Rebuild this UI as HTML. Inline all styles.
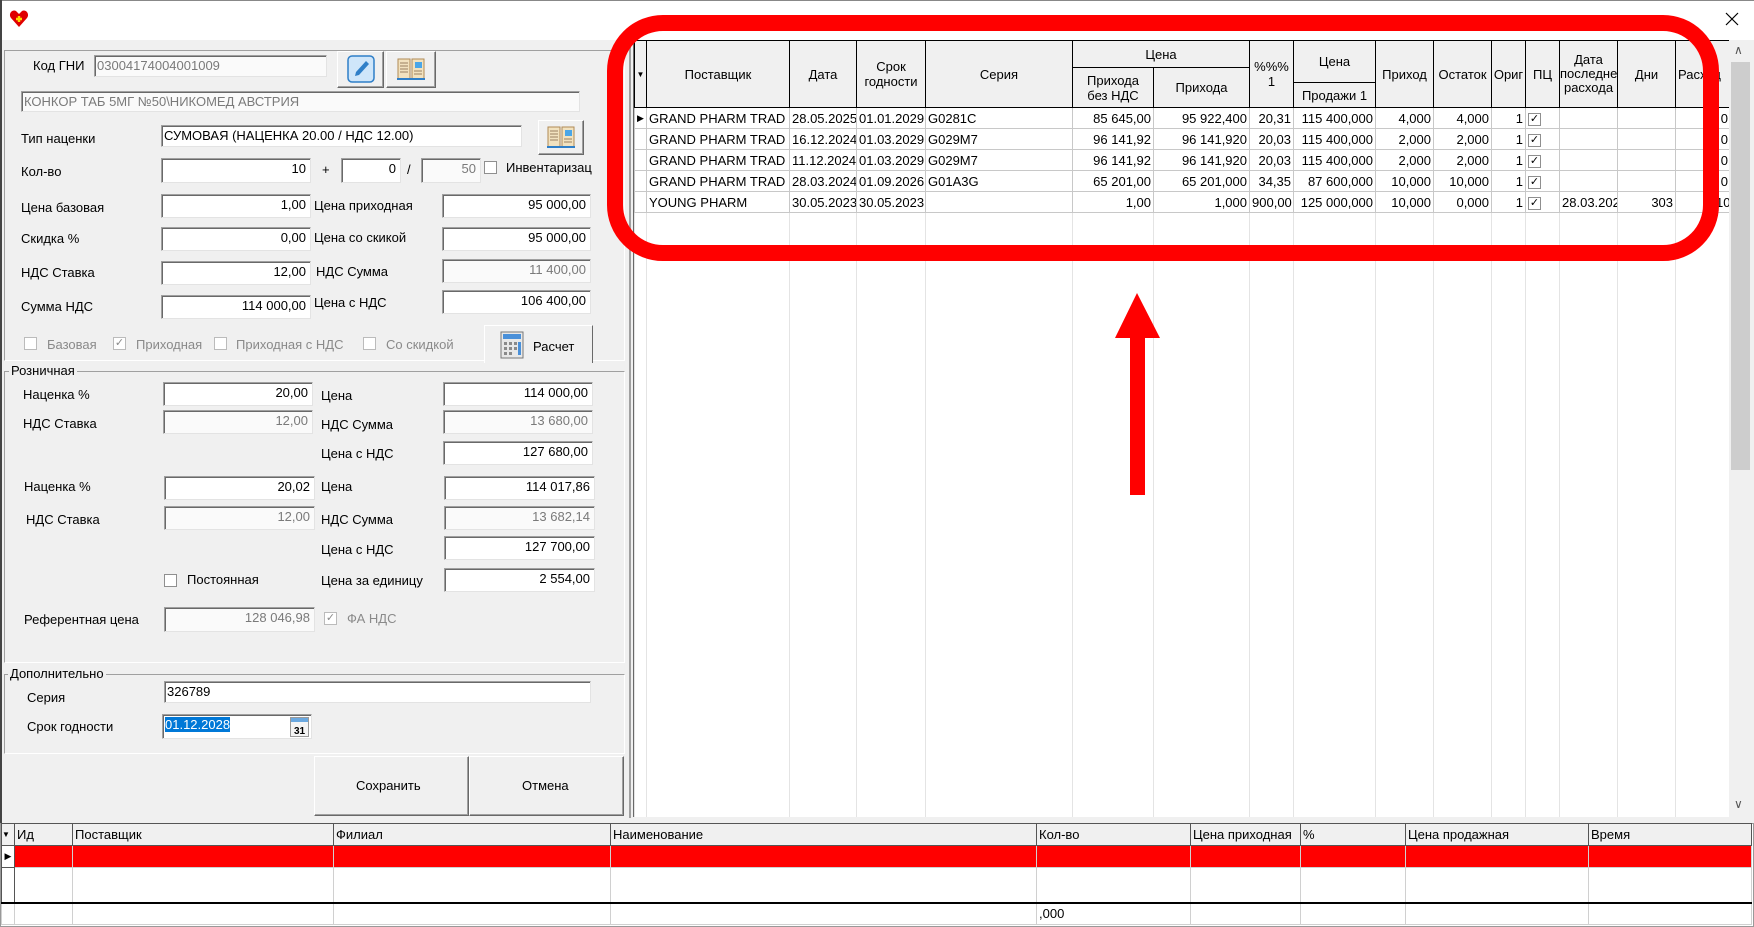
<!DOCTYPE html>
<html><head><meta charset="utf-8"><style>
*{box-sizing:border-box;margin:0;padding:0}
body{width:1754px;height:927px;position:relative;overflow:hidden;background:#f0f0f0;font-family:"Liberation Sans",sans-serif;font-size:13px;color:#000}
.a{position:absolute}
.l{position:absolute;white-space:nowrap;line-height:16px}
.i{position:absolute;background:#fff;border:1px solid;border-color:#a0a0a0 #e3e3e3 #e3e3e3 #a0a0a0;box-shadow:inset 1px 1px 0 #696969;text-align:right;padding:2px 4px 0 2px;white-space:nowrap;overflow:hidden;line-height:16px}
.d{color:#7a7a7a;background:#fafafa}
.t{text-align:left}
.b{position:absolute;background:#f0f0f0;border:1px solid;border-color:#fff #696969 #696969 #fff;box-shadow:inset -1px -1px 0 #a0a0a0}
.g{position:absolute;border:1px solid #c8c8c8;border-color:#a0a0a0 #fff #fff #a0a0a0}
.cb{position:absolute;width:13px;height:13px;background:#fff;border:1px solid #8f8f8f;font-size:11px;line-height:11px;text-align:center}
.gray{color:#8a8a8a}
table{border-collapse:collapse;table-layout:fixed;position:absolute}
td,th{overflow:hidden;white-space:nowrap;font-weight:normal;padding:0 2px;line-height:15px}
#gt th{background:#f0f0f0;border:1px solid #000;text-align:center;font-size:13px;line-height:15px}
#gt td{border:1px solid #c8c8c8;height:21px;text-align:right;font-size:13px}
#gt td.L{text-align:left}
#gt tr.e td{border-color:#e4e4e4;border-bottom:none;height:605px}
#bt th{background:#f0f0f0;border:1px solid #555;text-align:left;height:22px}
#bt td{border:1px solid #d0d0d0}
.ck{display:inline-block;width:13px;height:13px;border:1px solid #8f8f8f;background:#fff;font-size:11px;line-height:11px;text-align:center;vertical-align:middle}
</style></head><body>
<!-- title bar -->
<div class="a" style="left:0;top:0;width:1754px;height:40px;background:#fff;border-top:1px solid #888"></div>
<div class="a" style="left:0;top:0;width:2px;height:927px;background:#444"></div>
<svg class="a" style="left:9px;top:9px" width="20" height="20" viewBox="0 0 20 20"><path d="M10 18 L2 9 C-1 5 3 0 7 2 L10 5 L13 2 C17 0 21 5 18 9 Z" fill="#e00000"/><path d="M7 10h6M10 7v6" stroke="#ffd800" stroke-width="2.4"/></svg>
<svg class="a" style="left:1725px;top:12px" width="14" height="14" viewBox="0 0 14 14"><path d="M1 1L13 13M13 1L1 13" stroke="#000" stroke-width="1.2"/></svg>

<!-- left panel groups -->
<div class="g" style="left:4px;top:50px;width:621px;height:311px"></div>
<div class="l" style="left:33px;top:58px">Код ГНИ</div>
<div class="i d t" style="left:94px;top:55px;width:233px;height:22px">03004174004001009</div>
<div class="b" style="left:337px;top:51px;width:47px;height:37px"></div>
<svg class="a" style="left:347px;top:55px" width="28" height="28" viewBox="0 0 28 28"><rect x="1" y="1" width="26" height="26" rx="4" fill="#cfe6fa" stroke="#2f7fc8" stroke-width="1.5"/><path d="M8 21 L9 17 L19 6 L22 9 L12 20 Z" fill="#2f7fc8"/></svg>
<div class="b" style="left:386px;top:51px;width:50px;height:37px"></div>
<svg class="a" style="left:396px;top:56px" width="30" height="26" viewBox="0 0 30 26"><path d="M2 3h12v20H2z" fill="#f2e2bf" stroke="#b08a55"/><path d="M16 3h12v20H16z" fill="#f2e2bf" stroke="#b08a55"/><rect x="19" y="6" width="7" height="6" fill="#4aa6e8"/><path d="M4 7h8M4 10h8M4 13h8M4 16h8M18 15h8M18 18h8" stroke="#9a8060"/><path d="M1 23h28" stroke="#2f7fc8" stroke-width="2"/></svg>
<div class="i d t" style="left:21px;top:91px;width:559px;height:21px">КОНКОР ТАБ 5МГ №50\НИКОМЕД АВСТРИЯ</div>
<div class="l" style="left:21px;top:131px">Тип наценки</div>
<div class="i t" style="left:161px;top:125px;width:361px;height:22px">СУМОВАЯ (НАЦЕНКА 20.00 / НДС 12.00)</div>
<div class="b" style="left:538px;top:120px;width:46px;height:35px"></div>
<svg class="a" style="left:546px;top:124px" width="30" height="26" viewBox="0 0 30 26"><path d="M2 3h12v20H2z" fill="#f2e2bf" stroke="#b08a55"/><path d="M16 3h12v20H16z" fill="#f2e2bf" stroke="#b08a55"/><rect x="19" y="6" width="7" height="6" fill="#4aa6e8"/><path d="M4 7h8M4 10h8M4 13h8M4 16h8M18 15h8M18 18h8" stroke="#9a8060"/><path d="M1 23h28" stroke="#2f7fc8" stroke-width="2"/></svg>
<div class="l" style="left:21px;top:164px">Кол-во</div>
<div class="i" style="left:161px;top:158px;width:150px;height:25px">10</div>
<div class="l" style="left:322px;top:162px">+</div>
<div class="i" style="left:341px;top:158px;width:60px;height:25px">0</div>
<div class="l" style="left:407px;top:162px">/</div>
<div class="i d" style="left:421px;top:158px;width:60px;height:25px">50</div>
<div class="cb" style="left:484px;top:161px"></div>
<div class="l" style="left:506px;top:160px">Инвентаризац</div>

<div class="l" style="left:21px;top:200px">Цена базовая</div>
<div class="i" style="left:161px;top:194px;width:150px;height:24px">1,00</div>
<div class="l" style="left:314px;top:198px">Цена приходная</div>
<div class="i" style="left:442px;top:194px;width:149px;height:24px">95 000,00</div>
<div class="l" style="left:21px;top:231px">Скидка %</div>
<div class="i" style="left:161px;top:227px;width:150px;height:24px">0,00</div>
<div class="l" style="left:314px;top:230px">Цена со скикой</div>
<div class="i" style="left:442px;top:227px;width:149px;height:24px">95 000,00</div>
<div class="l" style="left:21px;top:265px">НДС Ставка</div>
<div class="i" style="left:161px;top:261px;width:150px;height:24px">12,00</div>
<div class="l" style="left:316px;top:264px">НДС Сумма</div>
<div class="i d" style="left:442px;top:259px;width:149px;height:24px">11 400,00</div>
<div class="l" style="left:21px;top:299px">Сумма НДС</div>
<div class="i" style="left:161px;top:295px;width:150px;height:24px">114 000,00</div>
<div class="l" style="left:314px;top:295px">Цена с НДС</div>
<div class="i" style="left:442px;top:290px;width:149px;height:24px">106 400,00</div>

<div class="cb" style="left:24px;top:337px;border-color:#bbb"></div><div class="l gray" style="left:47px;top:337px">Базовая</div>
<div class="cb gray" style="left:113px;top:337px;border-color:#bbb">✓</div><div class="l gray" style="left:136px;top:337px">Приходная</div>
<div class="cb" style="left:214px;top:337px;border-color:#bbb"></div><div class="l gray" style="left:236px;top:337px">Приходная с НДС</div>
<div class="cb" style="left:363px;top:337px;border-color:#bbb"></div><div class="l gray" style="left:386px;top:337px">Со скидкой</div>
<div class="b" style="left:484px;top:325px;width:109px;height:38px;border-bottom:none;box-shadow:none;border-right-color:#696969"></div>
<svg class="a" style="left:500px;top:331px" width="24" height="28" viewBox="0 0 24 28"><rect x="1" y="1" width="22" height="26" fill="#e8e8e8" stroke="#777"/><rect x="3" y="3" width="18" height="5" fill="#4a90d9"/><g fill="#8a8a8a"><rect x="4" y="11" width="3" height="3"/><rect x="9" y="11" width="3" height="3"/><rect x="14" y="11" width="3" height="3"/><rect x="4" y="16" width="3" height="3"/><rect x="9" y="16" width="3" height="3"/><rect x="14" y="16" width="3" height="3"/><rect x="4" y="21" width="3" height="3"/><rect x="9" y="21" width="3" height="3"/></g><rect x="18" y="11" width="3" height="13" fill="#4a90d9"/></svg>
<div class="l" style="left:533px;top:339px">Расчет</div>

<div class="g" style="left:4px;top:371px;width:621px;height:292px"></div>
<div class="l" style="left:9px;top:363px;background:#f0f0f0;padding:0 2px">Розничная</div>
<div class="l" style="left:23px;top:387px">Наценка %</div>
<div class="i" style="left:163px;top:382px;width:150px;height:24px">20,00</div>
<div class="l" style="left:321px;top:388px">Цена</div>
<div class="i" style="left:443px;top:382px;width:150px;height:24px">114 000,00</div>
<div class="l" style="left:23px;top:416px">НДС Ставка</div>
<div class="i d" style="left:163px;top:410px;width:150px;height:24px">12,00</div>
<div class="l" style="left:321px;top:417px">НДС Сумма</div>
<div class="i d" style="left:443px;top:410px;width:150px;height:24px">13 680,00</div>
<div class="l" style="left:321px;top:446px">Цена с НДС</div>
<div class="i" style="left:443px;top:441px;width:150px;height:24px">127 680,00</div>
<div class="l" style="left:24px;top:479px">Наценка %</div>
<div class="i" style="left:164px;top:476px;width:151px;height:24px">20,02</div>
<div class="l" style="left:321px;top:479px">Цена</div>
<div class="i" style="left:444px;top:476px;width:151px;height:24px">114 017,86</div>
<div class="l" style="left:26px;top:512px">НДС Ставка</div>
<div class="i d" style="left:164px;top:506px;width:151px;height:24px">12,00</div>
<div class="l" style="left:321px;top:512px">НДС Сумма</div>
<div class="i d" style="left:444px;top:506px;width:151px;height:24px">13 682,14</div>
<div class="l" style="left:321px;top:542px">Цена с НДС</div>
<div class="i" style="left:444px;top:536px;width:151px;height:24px">127 700,00</div>
<div class="cb" style="left:164px;top:574px"></div>
<div class="l" style="left:187px;top:572px">Постоянная</div>
<div class="l" style="left:321px;top:573px">Цена за единицу</div>
<div class="i" style="left:444px;top:568px;width:151px;height:24px">2 554,00</div>
<div class="l" style="left:24px;top:612px">Референтная цена</div>
<div class="i d" style="left:164px;top:607px;width:151px;height:25px">128 046,98</div>
<div class="cb gray" style="left:324px;top:612px;border-color:#bbb">✓</div>
<div class="l gray" style="left:347px;top:611px">ФА НДС</div>

<div class="g" style="left:4px;top:674px;width:621px;height:80px"></div>
<div class="l" style="left:8px;top:666px;background:#f0f0f0;padding:0 2px">Дополнительно</div>
<div class="l" style="left:27px;top:690px">Серия</div>
<div class="i t" style="left:164px;top:681px;width:427px;height:22px">326789</div>
<div class="l" style="left:27px;top:719px">Срок годности</div>
<div class="i t" style="left:162px;top:714px;width:150px;height:25px;padding-left:2px"><span style="background:#0078d7;color:#fff">01.12.2028</span></div>
<svg class="a" style="left:290px;top:717px" width="19" height="20" viewBox="0 0 19 20"><rect x="0.5" y="0.5" width="18" height="19" fill="#f4f4f4" stroke="#999"/><rect x="1" y="1" width="17" height="4" fill="#6aa8e0"/><text x="9.5" y="17" font-size="10" font-family="Liberation Sans" text-anchor="middle" font-weight="bold">31</text></svg>
<div class="b" style="left:314px;top:756px;width:155px;height:60px"></div>
<div class="l" style="left:356px;top:778px">Сохранить</div>
<div class="b" style="left:469px;top:756px;width:155px;height:60px"></div>
<div class="l" style="left:522px;top:778px">Отмена</div>

<!-- separator -->
<div class="a" style="left:629px;top:40px;width:2px;height:778px;background:#a0a0a0"></div>

<!-- right grid -->
<div class="a" style="left:633px;top:40px;width:1096px;height:777px;background:#fff;border-left:1px solid #696969;overflow:hidden">
<table id="gt" style="left:0;top:0;width:1096px">
<colgroup><col style="width:12px"><col style="width:143px"><col style="width:67px"><col style="width:69px"><col style="width:147px"><col style="width:81px"><col style="width:96px"><col style="width:44px"><col style="width:82px"><col style="width:58px"><col style="width:58px"><col style="width:34px"><col style="width:34px"><col style="width:58px"><col style="width:58px"><col style="width:55px"></colgroup>
<tr style="height:27px"><th rowspan="3" style="font-size:8px;padding:0">▼</th><th rowspan="3">Поставщик</th><th rowspan="3">Дата</th><th rowspan="3">Срок<br>годности</th><th rowspan="3">Серия</th><th colspan="2">Цена</th><th rowspan="3">%%%<br>1</th><th rowspan="2">Цена</th><th rowspan="3">Приход</th><th rowspan="3">Остаток</th><th rowspan="3" style="padding:0">Ориг</th><th rowspan="3" style="padding:0">ПЦ</th><th rowspan="3" style="padding:0;line-height:14px">Дата<br>последнег<br>расхода</th><th rowspan="3">Дни</th><th rowspan="3" style="text-align:left">Расход</th></tr>
<tr style="height:15px"><th rowspan="2">Прихода<br>без НДС</th><th rowspan="2">Прихода</th></tr>
<tr style="height:25px"><th>Продажи 1</th></tr>
<tr><td style="padding:0;text-align:center;font-size:9px">▶</td><td class="L">GRAND PHARM TRAD</td><td class="L">28.05.2025</td><td class="L">01.01.2029</td><td class="L">G0281C</td><td>85 645,00</td><td>95 922,400</td><td>20,31</td><td>115 400,000</td><td>4,000</td><td>4,000</td><td>1</td><td style="text-align:left"><span class="ck">✓</span></td><td></td><td></td><td>0</td></tr>
<tr><td></td><td class="L">GRAND PHARM TRAD</td><td class="L">16.12.2024</td><td class="L">01.03.2029</td><td class="L">G029M7</td><td>96 141,92</td><td>96 141,920</td><td>20,03</td><td>115 400,000</td><td>2,000</td><td>2,000</td><td>1</td><td style="text-align:left"><span class="ck">✓</span></td><td></td><td></td><td>0</td></tr>
<tr><td></td><td class="L">GRAND PHARM TRAD</td><td class="L">11.12.2024</td><td class="L">01.03.2029</td><td class="L">G029M7</td><td>96 141,92</td><td>96 141,920</td><td>20,03</td><td>115 400,000</td><td>2,000</td><td>2,000</td><td>1</td><td style="text-align:left"><span class="ck">✓</span></td><td></td><td></td><td>0</td></tr>
<tr><td></td><td class="L">GRAND PHARM TRAD</td><td class="L">28.03.2024</td><td class="L">01.09.2026</td><td class="L">G01A3G</td><td>65 201,00</td><td>65 201,000</td><td>34,35</td><td>87 600,000</td><td>10,000</td><td>10,000</td><td>1</td><td style="text-align:left"><span class="ck">✓</span></td><td></td><td></td><td>0</td></tr>
<tr><td></td><td class="L">YOUNG PHARM</td><td class="L">30.05.2023</td><td class="L">30.05.2023</td><td class="L"></td><td>1,00</td><td>1,000</td><td>900,00</td><td>125 000,000</td><td>10,000</td><td>0,000</td><td>1</td><td style="text-align:left"><span class="ck">✓</span></td><td class="L">28.03.202</td><td>303</td><td style="text-align:left;padding-left:40px">10</td></tr>
<tr class="e"><td></td><td></td><td></td><td></td><td></td><td></td><td></td><td></td><td></td><td></td><td></td><td></td><td></td><td></td><td></td><td></td></tr>
</table>
</div>
<!-- scrollbar -->
<div class="a" style="left:1729px;top:40px;width:23px;height:777px;background:#f0f0f0"></div>
<div class="a" style="left:1731px;top:62px;width:19px;height:408px;background:#cdcdcd"></div>
<div class="l" style="left:1734px;top:42px;font-size:12px;color:#555">∧</div>
<div class="l" style="left:1734px;top:796px;font-size:12px;color:#555">∨</div>

<!-- bottom grid -->
<div class="a" style="left:0;top:823px;width:1754px;height:104px;background:#fff;border:1px solid #999"></div>
<table id="bt" style="left:1px;top:823px;width:1750px">
<colgroup><col style="width:13px"><col style="width:58px"><col style="width:261px"><col style="width:277px"><col style="width:426px"><col style="width:154px"><col style="width:110px"><col style="width:105px"><col style="width:183px"><col style="width:163px"></colgroup>
<tr><th style="font-size:8px;padding:0">▼</th><th>Ид</th><th>Поставщик</th><th>Филиал</th><th>Наименование</th><th>Кол-во</th><th>Цена приходная</th><th>%</th><th>Цена продажная</th><th>Время</th></tr>
<tr style="height:22px;background:#ff0000"><td style="background:#fff;font-size:9px;padding:0;text-align:center;border-color:#555">▶</td><td></td><td></td><td></td><td></td><td></td><td></td><td></td><td></td><td></td></tr>
<tr style="height:35px"><td style="border-color:#555"></td><td></td><td></td><td></td><td></td><td></td><td></td><td></td><td></td><td></td></tr>
<tr style="height:22px;border-top:2px solid #000"><td></td><td></td><td></td><td></td><td></td><td>,000</td><td></td><td></td><td></td><td></td></tr>
</table>

<!-- annotations -->
<div class="a" style="left:607px;top:15px;width:1112px;height:246px;border:16px solid #ff0000;border-radius:56px"></div>
<svg class="a" style="left:1110px;top:290px" width="56" height="210" viewBox="0 0 56 210"><path d="M27 3 L50 48 L35 48 L35 205 L20 205 L20 48 L5 48 Z" fill="#ff0000"/></svg>
</body></html>
